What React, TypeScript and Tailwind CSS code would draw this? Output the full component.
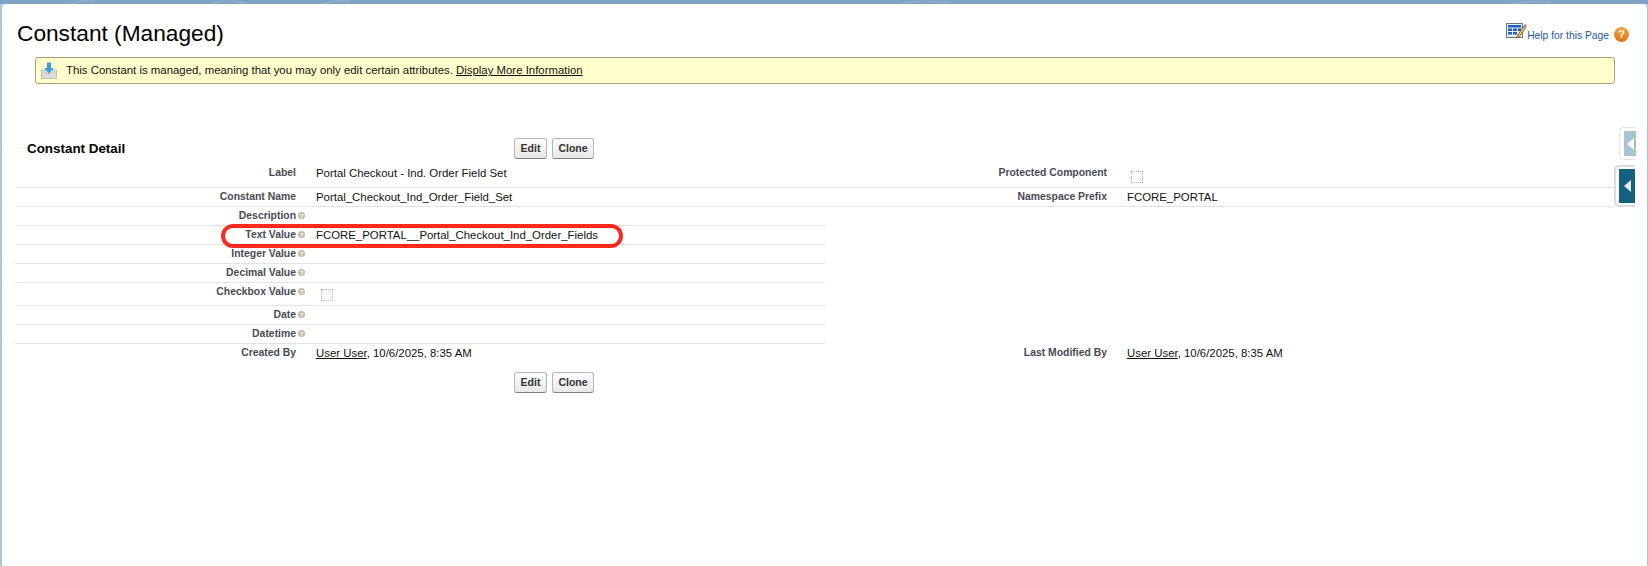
const leftRows = [
  { label: "Integer Value", help: true },
  { label: "Decimal Value", help: true },
];

function HelpDot() {
  return (
    <span className="ml-[2px] inline-flex h-[7px] w-[7px] shrink-0 items-center justify-center rounded-full bg-[#c9b99f] text-[6px] font-bold leading-none text-white">
      ?
    </span>
  );
}

function CheckOff() {
  return <span className="block h-[12px] w-[12px] border border-dotted border-[#b5b5b5]" />;
}

function Cell({ label, help, children, labelW, className }: { label?: string; help?: boolean; children?: React.ReactNode; labelW: string; className?: string }) {
  return (
    <div className={`flex items-start ${className ?? ""}`}>
      <div className={`flex shrink-0 items-center justify-end pt-[2px] ${labelW}`}>
        {label && <span className="text-[10.4px] font-bold leading-[13px] text-[#4a4a56]">{label}</span>}
        {help ? <HelpDot /> : <span className="w-[9px] shrink-0" />}
      </div>
      <div className="pl-[11px] pt-[2px] text-[11.4px] leading-[14px] text-[#111]">{children}</div>
    </div>
  );
}

function Button({ children, className }: { children: React.ReactNode; className: string }) {
  return (
    <button className={`h-[21px] rounded-[3px] border border-[#b5b5b5] border-b-[#7f7f7f] bg-gradient-to-b from-[#fdfdfd] to-[#e8e8e8] text-[10.5px] font-bold leading-none text-[#333] ${className}`}>
      {children}
    </button>
  );
}

function Buttons() {
  return (
    <div className="flex gap-[5px]">
      <Button className="w-[33px]">Edit</Button>
      <Button className="w-[42px]">Clone</Button>
    </div>
  );
}

const LEFT = "w-[290px]";
const RIGHT = "w-[291px]";

export default function App() {
  return (
    <div className="h-[566px] w-[1648px] overflow-hidden bg-[#a9c3e3] font-['Liberation_Sans',Arial,sans-serif]">
      <svg width="1648" height="4" viewBox="0 0 1648 4" className="block bg-[#7ea3c9]">
        <path d="M70 4 Q80 0 95 1 M210 4 Q225 -1 245 3 M320 4 Q340 0 350 1 M900 4 Q920 -1 950 3 M1510 4 Q1530 0 1550 2" fill="none" stroke="#93b3d4" strokeWidth="1" />
      </svg>
      <div className="relative ml-[2px] mr-[1px] h-[562px] rounded-t-[4px] bg-white">
        <div className="flex h-[53px] items-start justify-between pl-[15px] pr-[18px]">
          <h1 className="pt-[14px] text-[22.7px] leading-[30px] text-black">Constant (Managed)</h1>
          <div className="flex items-start pt-[19px]">
            <svg width="21" height="17" viewBox="0 0 21 17">
              <rect x="0.5" y="0.5" width="16" height="14" fill="#e8eef6" stroke="#6d7480" />
              <rect x="2" y="2" width="13" height="2.5" fill="#1e5fbf" />
              <rect x="2" y="5.5" width="4" height="2.5" fill="#1e5fbf" />
              <rect x="7" y="5.5" width="4" height="2.5" fill="#1e5fbf" />
              <rect x="12" y="5.5" width="3" height="2.5" fill="#1e5fbf" />
              <rect x="2" y="9" width="4" height="2.5" fill="#1e5fbf" />
              <rect x="7" y="9" width="4" height="2.5" fill="#1e5fbf" />
              <path d="M11 13 L18 3 L20 4.5 L13 14 L10.5 15 Z" fill="#f0c040" stroke="#333" strokeWidth="0.6" />
              <path d="M18 3 L19 1 L20.5 2 L20 4.5 Z" fill="#b565a7" />
            </svg>
            <a className="mt-[6px] text-[10.3px] leading-[14px] text-[#1e5a9a]">Help for this Page</a>
            <span className="ml-[5px] mt-[4px] flex h-[15px] w-[15px] items-center justify-center rounded-full bg-gradient-to-b from-[#f5a53c] to-[#d9730f] text-[11px] font-bold leading-none text-white">
              ?
            </span>
          </div>
        </div>

        <div className="ml-[33px] mr-[32px] flex h-[27px] items-center rounded-[3px] border border-[#a8a27a] bg-[#ffffcc] pl-[5px]">
          <svg width="16" height="17" viewBox="0 0 16 17">
            <path d="M0.5 8 L4 8 L5 11 L11 11 L12 8 L15.5 8 L15.5 16.5 L0.5 16.5 Z" fill="#dcdcdc" stroke="#a5a5a5" strokeWidth="0.6" />
            <path d="M6 0.5 H10 V6 H13 L8 11.5 L3 6 H6 Z" fill="#3a9be0" />
          </svg>
          <span className="ml-[9px] pb-[1px] text-[11.4px] leading-[14px] text-[#111]">
            This Constant is managed, meaning that you may only edit certain attributes.{" "}
            <a className="underline">Display More Information</a>
          </span>
        </div>

        <div className="ml-[13px] mr-[33px] mt-[54px]">
          <div className="flex h-[26px] items-start">
            <h2 className="w-[499px] pl-[12px] pt-[3px] text-[13.4px] font-bold leading-[16px] text-black">Constant Detail</h2>
            <Buttons />
          </div>

          <div className="grid h-[24px] grid-cols-[810px_1fr] border-b border-[#e3e3e3]">
            <Cell label="Label" labelW={LEFT}>Portal Checkout - Ind. Order Field Set</Cell>
            <Cell label="Protected Component" labelW={RIGHT}>
              <span className="ml-[4px] mt-[5px] block"><CheckOff /></span>
            </Cell>
          </div>
          <div className="grid h-[19px] grid-cols-[810px_1fr] border-b border-[#e3e3e3]">
            <Cell label="Constant Name" labelW={LEFT}>Portal_Checkout_Ind_Order_Field_Set</Cell>
            <Cell label="Namespace Prefix" labelW={RIGHT}>FCORE_PORTAL</Cell>
          </div>

          <div className="w-[810px]">
            <Cell label="Description" help labelW={LEFT} className="h-[19px] border-b border-[#e3e3e3]" />
            <Cell label="Text Value" help labelW={LEFT} className="h-[19px] border-b border-[#e3e3e3]">
              FCORE_PORTAL__Portal_Checkout_Ind_Order_Fields
            </Cell>
            {leftRows.map((r) => (
              <Cell key={r.label} label={r.label} help={r.help} labelW={LEFT} className="h-[19px] border-b border-[#e3e3e3]" />
            ))}
            <Cell label="Checkbox Value" help labelW={LEFT} className="h-[23px] border-b border-[#e3e3e3]">
              <span className="ml-[5px] mt-[4px] block"><CheckOff /></span>
            </Cell>
            <Cell label="Date" help labelW={LEFT} className="h-[19px] border-b border-[#e3e3e3]" />
            <Cell label="Datetime" help labelW={LEFT} className="h-[19px] border-b border-[#e3e3e3]" />
          </div>
          <div className="grid h-[19px] grid-cols-[810px_1fr]">
            <Cell label="Created By" labelW={LEFT}>
              <a className="underline">User User</a>, 10/6/2025, 8:35 AM
            </Cell>
            <Cell label="Last Modified By" labelW={RIGHT}>
              <a className="underline">User User</a>, 10/6/2025, 8:35 AM
            </Cell>
          </div>
          <div className="mt-[9px] pl-[499px]">
            <Buttons />
          </div>
        </div>

        {/* red annotation around the text value row */}
        <div className="absolute left-[219px] top-[220px] h-[24px] w-[402px] rounded-full border-[4px] border-[#fb2a1c]" />

        {/* collapsed sidebar tabs */}
        <div className="absolute left-[1617px] top-[123px] h-[33px] w-[16px] rounded-l-[5px] border border-r-0 border-[#e4e4e4] bg-white py-[3px] pl-[4px]">
          <div className="flex h-[25px] w-[12px] items-center justify-center bg-[#a7c3cf]">
            <span className="h-0 w-0 border-y-[6px] border-r-[7px] border-y-transparent border-r-white" />
          </div>
        </div>
        <div className="absolute left-[1612px] top-[161px] h-[42px] w-[21px] rounded-l-[5px] border-2 border-r-0 border-[#dcdcdc] bg-white py-[2px] pl-[3px]">
          <div className="flex h-[34px] w-[16px] items-center justify-center bg-[#14627f]">
            <span className="h-0 w-0 border-y-[6px] border-r-[7px] border-y-transparent border-r-[#e8e8e8]" />
          </div>
        </div>
      </div>
    </div>
  );
}
